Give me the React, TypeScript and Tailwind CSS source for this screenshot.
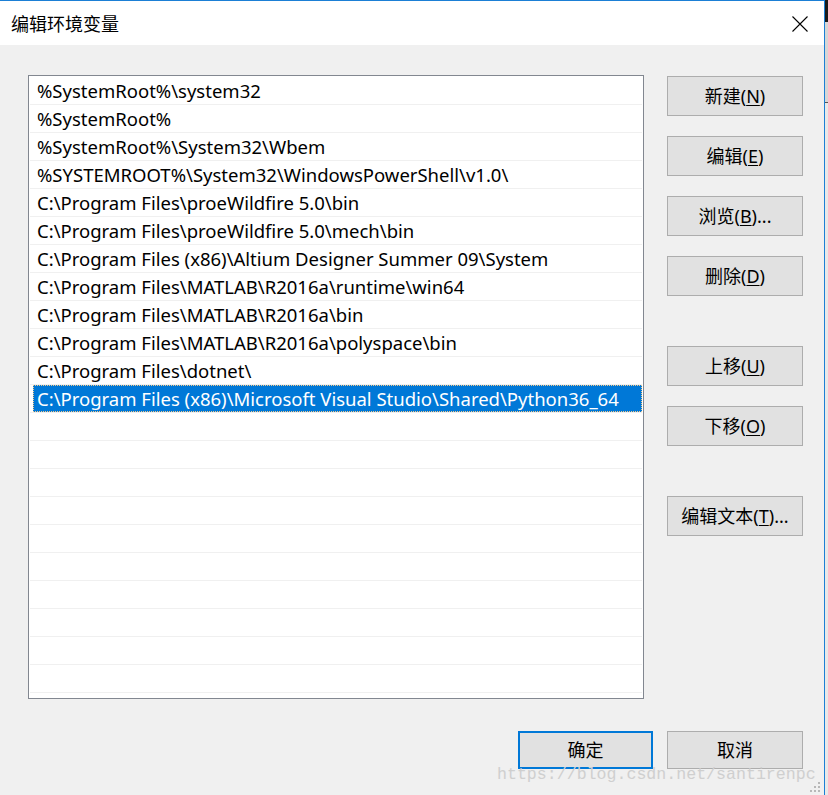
import React from 'react';

const paths = [
  '%SystemRoot%\\system32',
  '%SystemRoot%',
  '%SystemRoot%\\System32\\Wbem',
  '%SYSTEMROOT%\\System32\\WindowsPowerShell\\v1.0\\',
  'C:\\Program Files\\proeWildfire 5.0\\bin',
  'C:\\Program Files\\proeWildfire 5.0\\mech\\bin',
  'C:\\Program Files (x86)\\Altium Designer Summer 09\\System',
  'C:\\Program Files\\MATLAB\\R2016a\\runtime\\win64',
  'C:\\Program Files\\MATLAB\\R2016a\\bin',
  'C:\\Program Files\\MATLAB\\R2016a\\polyspace\\bin',
  'C:\\Program Files\\dotnet\\',
  'C:\\Program Files (x86)\\Microsoft Visual Studio\\Shared\\Python36_64',
];

const ROW_COUNT = 22;
const SELECTED = 11;

function SideButton({ label, hotkey, suffix = '', className = '' }: { label: string; hotkey: string; suffix?: string; className?: string }) {
  return (
    <button className={`flex items-center justify-center w-[136px] h-[40px] border border-[#adadad] bg-[#e1e1e1] text-[18px] text-black ${className}`}>
      {label}(<span className="underline underline-offset-2">{hotkey}</span>){suffix}
    </button>
  );
}

export default function App() {
  const rows = Array.from({ length: ROW_COUNT }, (_, i) => paths[i] ?? '');

  return (
    <div className="flex w-[828px] h-[795px] overflow-hidden bg-[#f0f0f0] font-['Noto_Sans','Noto_Sans_CJK_SC',sans-serif]">
      <div className="relative flex flex-col w-[825px] h-[795px] border-t border-r border-[#1b7fd5] bg-[#f0f0f0]">
        {/* Title bar */}
        <div className="flex items-center justify-between h-[44px] bg-white pl-[11px] pr-[16px]">
          <span className="text-[18px] text-black font-['Noto_Sans_CJK_SC',sans-serif]">编辑环境变量</span>
          <svg width="16" height="16" viewBox="0 0 16 16" className="mt-[1px]">
            <path d="M0.5 0.5 L15.5 15.5 M15.5 0.5 L0.5 15.5" stroke="#000" strokeWidth="1.1" fill="none" />
          </svg>
        </div>

        {/* List + side buttons */}
        <div className="flex pl-[28px] pt-[30px]">
          <div className="w-[616px] h-[624px] border border-[#828790] bg-white pt-[1px]">
            {rows.map((p, i) => (
              <div key={i} className="h-[28px] mx-[1px] border-b border-[#f0f0f0]">
                {i === SELECTED ? (
                  <div className="flex items-center h-full ml-[3px] pl-[4px] bg-[#0078d7] text-white text-[18.5px] whitespace-nowrap outline outline-1 outline-dotted outline-offset-[-1px] outline-[#f5c98a]">
                    {p}
                  </div>
                ) : (
                  <div className="flex items-center h-full pl-[7px] text-black text-[18.5px] whitespace-nowrap">{p}</div>
                )}
              </div>
            ))}
          </div>

          <div className="flex flex-col ml-[23px] mt-[1px]">
            <SideButton label="新建" hotkey="N" />
            <SideButton label="编辑" hotkey="E" className="mt-[20px]" />
            <SideButton label="浏览" hotkey="B" suffix="..." className="mt-[20px]" />
            <SideButton label="删除" hotkey="D" className="mt-[20px]" />
            <SideButton label="上移" hotkey="U" className="mt-[50px]" />
            <SideButton label="下移" hotkey="O" className="mt-[20px]" />
            <SideButton label="编辑文本" hotkey="T" suffix="..." className="mt-[50px]" />
          </div>
        </div>

        {/* OK / Cancel */}
        <div className="flex pl-[518px] mt-[32px] gap-[14px]">
          <button className="flex items-center justify-center w-[135px] h-[38px] border-2 border-[#0078d7] bg-[#e1e1e1] text-[18px] text-black">
            确定
          </button>
          <button className="flex items-center justify-center w-[136px] h-[38px] border border-[#adadad] bg-[#e1e1e1] text-[18px] text-black">
            取消
          </button>
        </div>

        {/* watermark */}
        <span className="absolute left-[497px] top-[763px] text-[16.6px] leading-[22px] text-[#cfcfcf] font-['Liberation_Mono',monospace] whitespace-nowrap">
          https://blog.csdn.net/santirenpc
        </span>

        {/* resize grip */}
        <svg className="absolute left-[810px] top-[781px]" width="11" height="11" viewBox="0 0 11 11">
          <rect x="8" y="0" width="2" height="2" fill="#b8b8b8" />
          <rect x="4" y="4" width="2" height="2" fill="#b8b8b8" />
          <rect x="8" y="4" width="2" height="2" fill="#b8b8b8" />
          <rect x="0" y="8" width="2" height="2" fill="#b8b8b8" />
          <rect x="4" y="8" width="2" height="2" fill="#b8b8b8" />
          <rect x="8" y="8" width="2" height="2" fill="#b8b8b8" />
        </svg>
      </div>

      {/* sliver of the window behind */}
      <div className="flex flex-col w-[3px] h-[795px]">
        <div className="h-[22px] bg-[#1a1a1a]" />
        <div className="h-[80px] bg-[#d6d6d6]" />
        <div className="h-[1px] bg-[#555]" />
        <div className="flex-1 bg-[#e8e8e8]" />
      </div>
    </div>
  );
}
